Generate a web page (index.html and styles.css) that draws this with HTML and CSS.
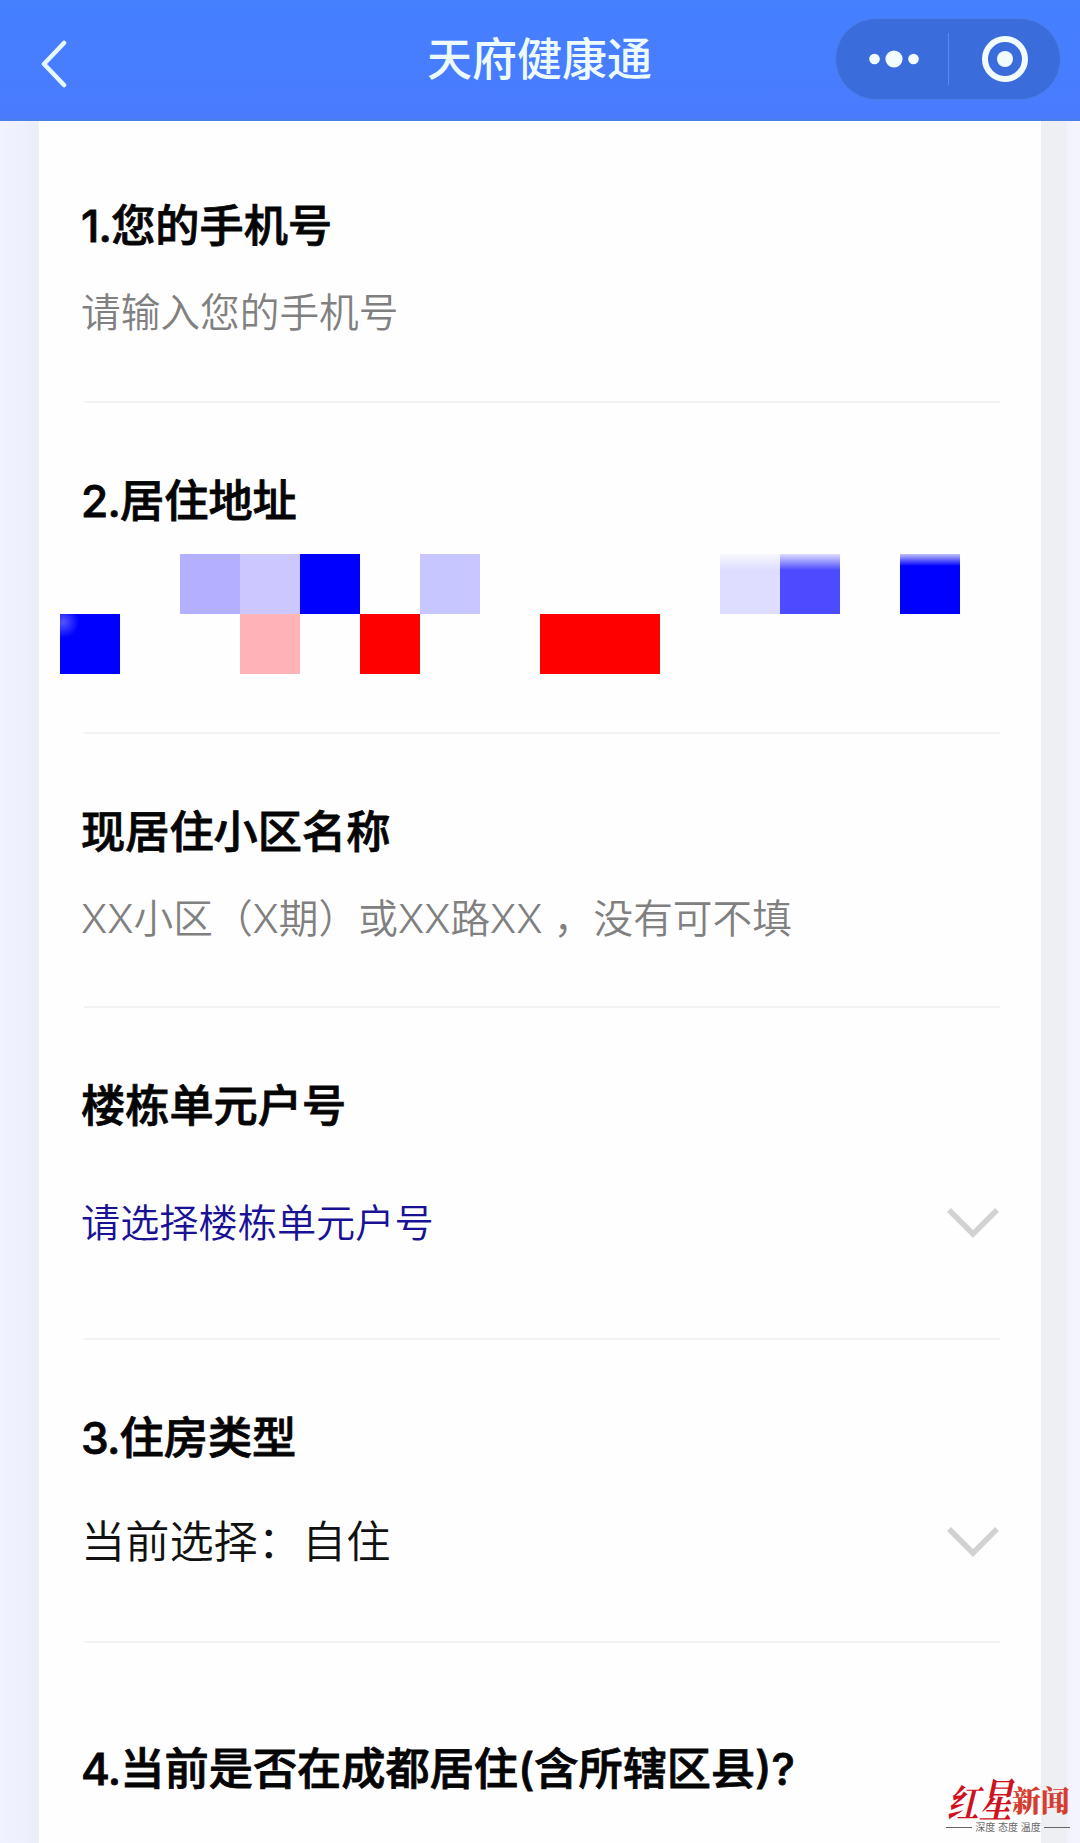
FILE: index.html
```
<!DOCTYPE html>
<html lang="zh-CN">
<head>
    <meta charset="UTF-8">
    <meta name="viewport" content="width=device-width, initial-scale=1.0">
    <title>天府健康通</title>
    <link rel="stylesheet" href="styles.css">
</head>
<body>

<header class="navbar">
    <svg class="back" viewBox="0 0 26 48" width="26" height="48">
        <path d="M23 3 L3 24 L23 45"/>
    </svg>
    <h1>天府健康通</h1>
    <div class="capsule">
        <svg class="more" viewBox="0 0 50 18" width="50" height="18">
            <circle cx="5.5" cy="9" r="5.3"/>
            <circle cx="25" cy="9" r="8.6"/>
            <circle cx="44.5" cy="9" r="5.3"/>
        </svg>
        <span class="split"></span>
        <svg class="close" viewBox="0 0 48 48" width="48" height="48">
            <circle class="ring" cx="24" cy="24" r="20"/>
            <circle cx="24" cy="24" r="8"/>
        </svg>
    </div>
</header>

<main class="card">
    <section class="item first">
        <h2><span class="num">1.</span>您的手机号</h2>
        <p class="placeholder">请输入您的手机号</p>
    </section>

    <section class="item address">
        <h2><span class="num">2.</span>居住地址</h2>
        <div class="mosaic">
            <i class="c3 lilac"></i>
            <i class="c4 lilac-light"></i>
            <i class="c5 blue"></i>
            <i class="c7 lilac-mid"></i>
            <i class="c12 lilac-pale"></i>
            <i class="c13 violet"></i>
            <i class="c15 blue fade"></i>
            <i class="c1 row2 blue corner"></i>
            <i class="c4 row2 pink"></i>
            <i class="c6 row2 red"></i>
            <i class="c9 row2 red wide"></i>
        </div>
    </section>

    <section class="item">
        <h2>现居住小区名称</h2>
        <p class="placeholder">XX小区（X期）或XX路XX ，没有可不填</p>
    </section>

    <section class="item unit">
        <h2>楼栋单元户号</h2>
        <div class="select">
            <span class="link">请选择楼栋单元户号</span>
            <svg class="arrow" viewBox="0 0 54 32" width="54" height="32">
                <path d="M3 3 L27 27 L51 3"/>
            </svg>
        </div>
    </section>

    <section class="item house">
        <h2><span class="num">3.</span>住房类型</h2>
        <div class="select">
            <span class="value">当前选择：自住</span>
            <svg class="arrow" viewBox="0 0 54 32" width="54" height="32">
                <path d="M3 3 L27 27 L51 3"/>
            </svg>
        </div>
    </section>

    <section class="item last">
        <h2><span class="num">4.</span>当前是否在成都居住(含所辖区县)?</h2>
    </section>
</main>

<div class="watermark">
    <div class="brand"><span class="brush">红</span><span class="brush star">星</span><span class="news">新闻</span></div>
    <div class="slogan">深度 态度 温度</div>
</div>

</body>
</html>
```

FILE: styles.css
```
* {
    box-sizing: border-box;
    margin: 0;
    padding: 0;
}
body {
    width: 1080px;
    height: 1843px;
    overflow: hidden;
    position: relative;
    font-family: Inter, "Noto Sans CJK SC", sans-serif;
    background: linear-gradient(to right, #f1f4ff 0, #edf0fd 26px, #ebedf8 36px, #f0f0f3 39px, #eeeff2 1041px, #eeeff4 1066px, #f3f4ff 1069px);
}
.navbar {
    height: 121px;
    padding: 0 19px 0 41px;
    display: grid;
    grid-template-columns: 226px 1fr 226px;
    align-items: center;
    background: linear-gradient(#4480ff, #4a7bff);
    border-bottom: 2px solid #4880e8;
}
.back {
    margin-top: 9px;
    fill: none;
    stroke: #e6f8ff;
    stroke-width: 4.5;
    stroke-linecap: round;
    stroke-linejoin: round;
}
.navbar h1 {
    font-size: 45px;
    font-weight: 500;
    line-height: 60px;
    text-align: center;
    color: #edfbff;
    padding-right: 23px;
    white-space: nowrap;
}
.capsule {
    width: 226px;
    height: 82px;
    margin-top: -1px;
    padding: 0 31px 0 33px;
    display: flex;
    align-items: center;
    justify-content: space-between;
    border-radius: 41px;
    background: #3b6cdb;
    border: 1px solid #4c7ee9;
}
.capsule svg {
    fill: #f2fbff;
}
.split {
    width: 1px;
    height: 52px;
    margin-left: -3px;
    background: #5b89ec;
}
.capsule .ring {
    fill: none;
    stroke: #f2fbff;
    stroke-width: 6;
}
.card {
    width: 1002px;
    height: 1722px;
    margin-left: 39px;
    background: #fefefe;
}
.item {
    padding: 68px 41px 0 42px;
}
.item::after {
    content: "";
    display: block;
    height: 2px;
    margin: 57px 0 0 3px;
    background: #f2f2f3;
}
.item.first {
    padding-top: 75px;
}
.item.first::after,
.item.address::after {
    margin-top: 58px;
}
.item.unit::after {
    margin-top: 85px;
}
.item.house::after {
    margin-top: 69px;
}
.item.last {
    padding-top: 96px;
}
.item.last::after {
    display: none;
}
.item h2 {
    height: 60px;
    font-size: 44.2px;
    font-weight: 500;
    -webkit-text-stroke: 0.8px #050505;
    line-height: 60px;
    color: #050505;
    white-space: nowrap;
}
.num {
    letter-spacing: -0.8px;
}
.placeholder {
    height: 60px;
    margin-top: 27px;
    font-size: 39.7px;
    line-height: 60px;
    color: #808080;
    white-space: nowrap;
}
/* latin letters are drawn lighter than the hanzi */
.placeholder,
.link,
.value {
    font-weight: 350;
}
.select {
    display: flex;
    align-items: center;
    justify-content: space-between;
    height: 60px;
    line-height: 60px;
}
.unit .select {
    margin-top: 57px;
}
.house .select {
    margin-top: 44px;
}
.link {
    font-size: 39.2px;
    color: #1a1295;
}
.value {
    font-size: 44.2px;
    color: #111;
}
.arrow {
    fill: none;
    stroke: #d2d2d2;
    stroke-width: 5.5;
}

/* censored address */
.mosaic {
    display: grid;
    grid-template-columns: repeat(15, 60px);
    grid-template-rows: 60px 60px;
    margin: 23px 0 0 -21px;
}
.mosaic i { grid-row: 1; }
.mosaic .row2 { grid-row: 2; }
.c1 { grid-column: 1; }
.c3 { grid-column: 3; }
.c4 { grid-column: 4; }
.c5 { grid-column: 5; }
.c6 { grid-column: 6; }
.c7 { grid-column: 7; }
.c9 { grid-column: 9; }
.c12 { grid-column: 12; }
.c13 { grid-column: 13; }
.c15 { grid-column: 15; }
.mosaic .wide { grid-column: 9 / span 2; }
.blue { background: #0000ff; }
.red { background: #ff0000; }
.pink { background: #ffb2b7; }
.lilac { background: #b3b0ff; }
.lilac-light { background: #ccc8ff; }
.lilac-mid { background: #c7c6ff; }
.lilac-pale { background: linear-gradient(#f8f8ff, #deddff 16px); }
.violet { background: linear-gradient(#dcdcff, #4d4bff 16px); }
.blue.fade { background: linear-gradient(#c0c0ff, #0000ff 12px); }
.blue.corner { background: radial-gradient(circle at 3px 8px, #5555ff, #0000ff 16px); }

/* news logo over the bottom right corner */
.watermark {
    position: absolute;
    right: 10px;
    bottom: 9px;
    width: 124px;
}
.brand {
    display: flex;
    align-items: flex-end;
    height: 50px;
    color: #d0121f;
    line-height: 1;
}
.brush {
    width: 32px;
    font-family: "Noto Serif CJK SC", "Noto Sans CJK SC", serif;
    font-size: 38px;
    font-weight: 700;
    transform: skewX(-14deg) scaleX(0.84);
    transform-origin: left bottom;
}
.star {
    width: 34px;
    font-size: 46px;
    transform: skewX(-12deg) scaleX(0.72);
}
.news {
    font-family: "Noto Serif CJK SC", "Noto Sans CJK SC", serif;
    font-size: 29px;
    font-weight: 900;
    line-height: 40px;
    color: #d63c30;
    white-space: nowrap;
}
.slogan {
    display: flex;
    align-items: center;
    justify-content: space-between;
    font-size: 10px;
    line-height: 14px;
    color: #666;
    white-space: nowrap;
}
.slogan::before,
.slogan::after {
    content: "";
    width: 26px;
    height: 1px;
    background: #666;
}
```
